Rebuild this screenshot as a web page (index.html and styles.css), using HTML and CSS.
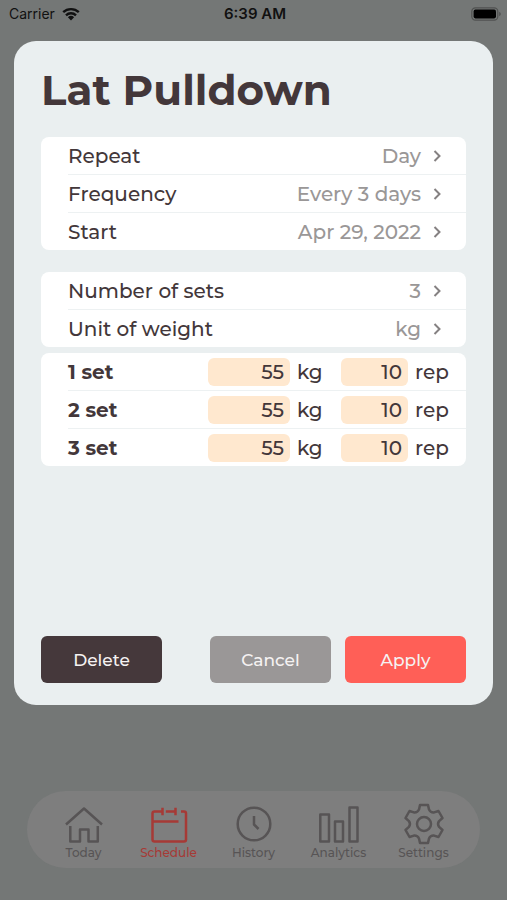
FILE: index.html
```html
<!DOCTYPE html>
<html lang="en">
<head>
<meta charset="utf-8">
<meta name="viewport" content="width=device-width, initial-scale=1">
<title>Lat Pulldown</title>
<link rel="stylesheet" href="styles.css">
</head>
<body>
<header class="status">
  <div class="carrier">
    <span>Carrier</span>
    <svg width="18" height="14" viewBox="0 0 18 14" aria-hidden="true">
      <path d="M1.2 5.2a11.3 11.3 0 0 1 15.6 0M4 8.3a7.2 7.2 0 0 1 10 0" fill="none" stroke="currentColor" stroke-width="2.4"/>
      <path d="M5.9 10.3a4.5 4.5 0 0 1 6.2 0L9 13.6z" fill="currentColor"/>
    </svg>
  </div>
  <div class="time">6:39 AM</div>
  <svg class="battery" width="30" height="14" viewBox="0 0 30 14" aria-hidden="true">
    <rect x=".8" y=".8" width="26" height="12.4" rx="3.6" fill="none" stroke="#505251" stroke-width="1.2"/>
    <rect x="2.6" y="2.6" width="22.4" height="8.8" rx="1.8" fill="#000"/>
    <path d="M28.2 4.8q1.6.8 1.6 2.2t-1.6 2.2z" fill="#505251"/>
  </svg>
</header>

<main class="sheet">
  <h1>Lat Pulldown</h1>

  <section class="card schedule" aria-label="Schedule">
    <button class="row" type="button"><span>Repeat</span><span class="value">Day</span><svg class="chevron" viewBox="0 0 8 12"><path d="M1.5 1l5 5-5 5"/></svg></button>
    <button class="row" type="button"><span>Frequency</span><span class="value">Every 3 days</span><svg class="chevron" viewBox="0 0 8 12"><path d="M1.5 1l5 5-5 5"/></svg></button>
    <button class="row" type="button"><span>Start</span><span class="value">Apr 29, 2022</span><svg class="chevron" viewBox="0 0 8 12"><path d="M1.5 1l5 5-5 5"/></svg></button>
  </section>

  <section class="card options" aria-label="Options">
    <button class="row" type="button"><span>Number of sets</span><span class="value">3</span><svg class="chevron" viewBox="0 0 8 12"><path d="M1.5 1l5 5-5 5"/></svg></button>
    <button class="row" type="button"><span>Unit of weight</span><span class="value">kg</span><svg class="chevron" viewBox="0 0 8 12"><path d="M1.5 1l5 5-5 5"/></svg></button>
  </section>

  <section class="card" aria-label="Sets">
    <div class="row set"><span class="set-name">1 set</span><input id="w1" value="55" inputmode="decimal"><label for="w1">kg</label><input id="r1" value="10" inputmode="numeric"><label for="r1">rep</label></div>
    <div class="row set"><span class="set-name">2 set</span><input id="w2" value="55" inputmode="decimal"><label for="w2">kg</label><input id="r2" value="10" inputmode="numeric"><label for="r2">rep</label></div>
    <div class="row set"><span class="set-name">3 set</span><input id="w3" value="55" inputmode="decimal"><label for="w3">kg</label><input id="r3" value="10" inputmode="numeric"><label for="r3">rep</label></div>
  </section>

  <div class="actions">
    <button class="action delete" type="button">Delete</button>
    <button class="action cancel" type="button">Cancel</button>
    <button class="action apply" type="button">Apply</button>
  </div>
</main>

<nav class="tabs">
  <a class="tab" href="#today">
    <svg viewBox="0 0 40 40"><path d="M2 20.500 20 4.500l18 16M6.300 22v15.500H16V25.500h8.500v12h9.300V22"/></svg>
    <span>Today</span>
  </a>
  <a class="tab current" href="#schedule" aria-current="page">
    <svg viewBox="0 0 40 40"><path d="M13.500 7.500H5.500q-2 0-2 2v26q0 2 2 2h29.500q2 0 2-2v-26q0-2-2-2h-3M16.800 7.500H26M3.500 17.500h26M13.500 3.800v7.500M26.500 3.800v7.500"/></svg>
    <span>Schedule</span>
  </a>
  <a class="tab" href="#history">
    <svg viewBox="0 0 40 40"><circle cx="20" cy="20" r="16.300"/><path d="M20 12v8.500l4.500 4.500"/></svg>
    <span>History</span>
  </a>
  <a class="tab" href="#analytics">
    <svg viewBox="0 0 40 40"><path d="M1.300 10.500h8.700v27H1.300zM16 17.500h8v20h-8zM30.500 3.500h8v34h-8z"/></svg>
    <span>Analytics</span>
  </a>
  <a class="tab" href="#settings">
    <svg viewBox="-20 -20 40 40"><circle r="7"/><path d="M-4-19H4L5-14.500Q6.500-11.300 10.100-11.600L14.500-13 18.500-6 15.100-2.900Q13 0 15.100 2.900L18.500 6 14.500 13 10.100 11.600Q6.500 11.300 5 14.500L4 19H-4L-5 14.500Q-6.500 11.300-10.100 11.600L-14.500 13-18.500 6-15.100 2.900Q-13 0-15.100-2.900L-18.500-6-14.500-13-10.100-11.600Q-6.500-11.300-5-14.500Z"/></svg>
    <span>Settings</span>
  </a>
</nav>
</body>
</html>
```
FILE: styles.css
```css
* {
  box-sizing: border-box;
}

body {
  margin: 0;
  min-height: 100vh;
  display: flex;
  flex-direction: column;
  background: #747776;
  color: #43373a;
  font-family: Montserrat, Inter, sans-serif;
  font-size: 20px;
  font-weight: 500;
  line-height: 24px;
}

button,
input {
  font: inherit;
  color: inherit;
  border: 0;
  margin: 0;
}

.status {
  display: grid;
  grid-template-columns: 1fr auto 1fr;
  align-items: center;
  height: 41px;
  padding: 0 6px 14px 9px;
  color: #111;
  font-family: Inter, sans-serif;
  font-size: 14px;
  font-weight: 400;
}

.carrier {
  display: flex;
  align-items: center;
  gap: 7px;
}

.time {
  font-size: 15px;
  font-weight: 600;
}

.battery {
  justify-self: end;
}

.sheet {
  flex: 1;
  display: flex;
  flex-direction: column;
  margin: 0 14px;
  padding: 24px 27px 22px;
  border-radius: 22px;
  background: #eaeff0;
}

h1 {
  margin: 0 0 22px;
  font-size: 42px;
  line-height: 50px;
  font-weight: 700;
}

.card {
  padding-left: 27px;
  border-radius: 8px;
  background: #fff;
}

.schedule {
  margin-bottom: 22px;
}

.options {
  margin-bottom: 6px;
}

.row {
  display: flex;
  align-items: center;
  width: 100%;
  height: 37px;
  padding: 0 25px 0 0;
  background: none;
  text-align: left;
}

.row + .row {
  height: 38px;
  border-top: 1px solid #edf1f2;
}

.value {
  margin-left: auto;
  color: #9a9797;
}

.chevron {
  width: 8px;
  height: 12px;
  margin-left: 12px;
  fill: none;
  stroke: #858182;
  stroke-width: 2;
}

.set {
  display: grid;
  grid-template-columns: 1fr 82px 51px 67px 58px;
  padding: 0;
}

.set-name {
  font-weight: 700;
}

.set input {
  width: 100%;
  height: 28px;
  padding: 0 6px;
  border-radius: 6px;
  background: #ffe8cf;
  text-align: right;
}

.set label {
  padding-left: 7px;
}

.actions {
  display: grid;
  grid-template-columns: 121px 1fr 121px 121px;
  column-gap: 14px;
  margin-top: auto;
}

.action {
  height: 47px;
  padding: 0;
  border-radius: 6px;
  color: #f5f2f2;
  font-size: 17px;
}

.delete {
  background: #45383b;
}

.cancel {
  grid-column: 3;
  background: #9a9797;
}

.apply {
  background: #ff5f57;
}

.tabs {
  display: grid;
  grid-template-columns: repeat(5, 1fr);
  margin: 86px 27px 32px;
  padding: 12px 14px 7px;
  border-radius: 39px;
  background: #7e7e7e;
}

.tab {
  display: flex;
  flex-direction: column;
  align-items: center;
  color: #575455;
  font-size: 12px;
  line-height: 16px;
  text-decoration: none;
}

.tab svg {
  width: 40px;
  height: 42px;
  overflow: visible;
  fill: none;
  stroke: currentColor;
  stroke-width: 2.5;
  stroke-linejoin: round;
}

.current {
  color: #a63a36;
}
```
